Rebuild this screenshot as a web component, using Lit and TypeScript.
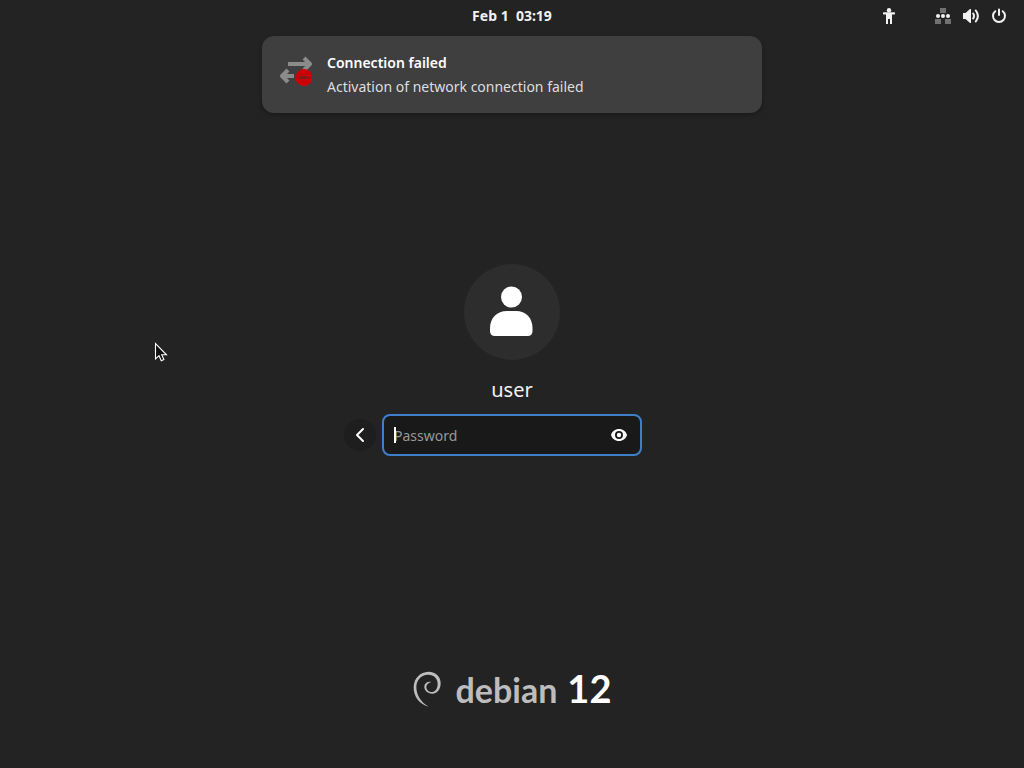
import { LitElement, html, css } from "lit";
import { customElement } from "lit/decorators.js";

@customElement("status-bar")
class StatusBar extends LitElement {
  static styles = css`
    :host {
      display: grid;
      grid-template-columns: 1fr auto 1fr;
      align-items: center;
      height: 32px;
      font-weight: 700;
      color: #f2f2f2;
    }
    time {
      grid-column: 2;
      font-size: 14px;
      line-height: 20px;
      white-space: pre;
    }
    .tray {
      display: flex;
      justify-content: flex-end;
      align-items: center;
      gap: 38px;
      padding-right: 17px;
    }
    .system {
      display: flex;
      gap: 12px;
    }
    button {
      display: block;
      padding: 0;
      border: 0;
      background: none;
      color: inherit;
    }
    svg {
      display: block;
      width: 16px;
      height: 16px;
      fill: currentColor;
    }
  `;
  render() {
    return html`
      <time>Feb 1  03:19</time>
      <div class="tray">
        <button aria-label="Accessibility">
          <svg viewBox="0 0 16 16">
            <circle cx="8" cy="2.2" r="2.2" />
            <path d="M2.6 4.300h10.800q.6 0 .6.7v.8q0 .7-.6.7H11V16H9V11H7v5H5V6.500H2.600q-.6 0-.6-.7V5q0-.7.6-.7z" />
          </svg>
        </button>
        <div class="system">
          <svg viewBox="0 0 16 16" role="img" aria-label="Network">
            <path opacity=".38" d="M5 0h6v5H5zM0 11h6v5H0zM10 11h6v5h-6z" />
            <circle cx="3" cy="8" r="2" />
            <circle cx="8" cy="8" r="2" />
            <circle cx="13" cy="8" r="2" />
          </svg>
          <svg viewBox="0 0 16 16" role="img" aria-label="Volume">
            <path d="M0 5h2.500L7 1h1v14H7l-4.500-4H0z" />
            <path fill="none" stroke="currentColor" stroke-width="2" stroke-linecap="round" d="M10.200 5.500q1.600 2.500 0 5M12.800 2.500q4.200 5.500 0 11" />
          </svg>
          <button aria-label="Power">
            <svg viewBox="0 0 16 16">
              <path fill="none" stroke="currentColor" stroke-width="2" stroke-linecap="round" d="M8 1.500v5.500M4.300 3.200a6 6 0 1 0 7.400 0" />
            </svg>
          </button>
        </div>
      </div>
    `;
  }
}

@customElement("message-banner")
class MessageBanner extends LitElement {
  static styles = css`
    :host {
      display: flex;
      gap: 15px;
      box-sizing: border-box;
      padding: 17px 18px 16px;
      border-radius: 12px;
      background: #3f3f3f;
      box-shadow: 0 2px 5px rgba(0, 0, 0, 0.3);
    }
    svg {
      flex: none;
      width: 32px;
      height: 32px;
      margin-top: 2px;
    }
    .title,
    .body {
      margin: 0;
      font-size: 14px;
      line-height: 20px;
    }
    .title {
      margin-bottom: 4px;
      font-weight: 600;
      color: #fff;
    }
    .body {
      color: #dedede;
    }
  `;
  render() {
    return html`
      <svg viewBox="0 0 32 32" aria-hidden="true">
        <g fill="none" stroke="#8b8b8b" stroke-width="4" stroke-linejoin="round">
          <path d="M8 9H29M24 3l6 6-6 6" />
          <path d="M14 21H3M8 15l-6 6 6 6" />
        </g>
        <circle cx="24" cy="22.500" r="8.500" fill="#cc0008" />
        <path d="M19.500 21h9v3h-9z" fill="#7e1a1c" />
      </svg>
      <div>
        <p class="title">Connection failed</p>
        <p class="body">Activation of network connection failed</p>
      </div>
    `;
  }
}

@customElement("login-prompt")
class LoginPrompt extends LitElement {
  static styles = css`
    :host {
      display: flex;
      flex-direction: column;
      align-items: center;
    }
    .avatar {
      display: block;
      width: 96px;
      height: 96px;
      border-radius: 50%;
      background: #2d2d2d;
    }
    h1 {
      margin: 16px 0 10px;
      font-size: 20px;
      line-height: 28px;
      font-weight: 400;
      color: #f2f2f2;
    }
    form {
      display: grid;
      grid-template-columns: 32px 260px 32px;
      align-items: center;
      gap: 6px;
    }
    button {
      display: grid;
      place-items: center;
      padding: 0;
      border: 0;
      background: none;
      color: #fff;
    }
    .back {
      width: 32px;
      height: 32px;
      border-radius: 50%;
      background: #1e1e1e;
    }
    .field {
      display: flex;
      align-items: center;
      box-sizing: border-box;
      height: 42px;
      padding: 0 13px 0 10px;
      border: 2px solid #3f7fca;
      border-radius: 8px;
      background: #191919;
    }
    .caret {
      width: 2px;
      height: 16px;
      margin-right: -2px;
      background: #fff;
      z-index: 1;
    }
    input {
      flex: 1;
      min-width: 0;
      padding: 2px 0 0;
      border: 0;
      outline: 0;
      background: none;
      color: #fff;
      font: inherit;
      font-size: 14px;
      line-height: 20px;
    }
    input::placeholder {
      color: #989898;
      opacity: 1;
    }
    .icon {
      display: block;
      width: 16px;
      height: 16px;
    }
  `;
  render() {
    return html`
      <svg class="avatar" viewBox="0 0 96 96" fill="#fff" aria-hidden="true">
        <circle cx="47.500" cy="33" r="10.500" />
        <path d="M43 47h9c10 0 16.500 7 16.500 17v3q0 5-5 5H31q-5 0-5-5v-3c0-10 7-17 17-17z" />
      </svg>
      <h1>user</h1>
      <form @submit=${(e: Event) => e.preventDefault()}>
        <button class="back" type="button" aria-label="Back">
          <svg class="icon" viewBox="0 0 16 16" fill="none" stroke="currentColor" stroke-width="2" stroke-linecap="round" stroke-linejoin="round">
            <path d="M11 2 5 8l6 6" />
          </svg>
        </button>
        <div class="field">
          <span class="caret"></span>
          <input type="password" placeholder="Password" aria-label="Password" />
          <button type="button" aria-label="Show password">
            <svg class="icon" viewBox="0 0 16 16">
              <path fill="currentColor" fill-rule="evenodd" d="M8 2c4 0 7 2.500 8 6-1 3.500-4 6-8 6s-7-2.500-8-6c1-3.500 4-6 8-6zM8 4a4 4 0 1 0 0 8 4 4 0 0 0 0-8z" />
              <circle cx="8" cy="8" r="2.200" fill="currentColor" />
            </svg>
          </button>
        </div>
      </form>
    `;
  }
}

@customElement("distro-logo")
class DistroLogo extends LitElement {
  static styles = css`
    :host {
      display: flex;
      align-items: baseline;
      justify-content: center;
      font-family: Lato, "Noto Sans", sans-serif;
      line-height: 48px;
      color: #bdbdbd;
    }
    svg {
      align-self: center;
      width: 28px;
      height: 36px;
      margin-right: 15px;
    }
    .name {
      font-size: 34px;
      font-weight: 700;
    }
    .version {
      margin-left: 10px;
      font-size: 38px;
      font-weight: 700;
      color: #fff;
    }
  `;
  render() {
    return html`
      <svg viewBox="10 12 84 108" fill="currentColor" aria-hidden="true">
        <path d="M57 119C28 111 11 87 12 59C13 33 32 15 56 14C79 14 94 30 93 50C92 68 82 79 68 80C53 80 43 70 44 58C45 48 54 43 65 45C56 48 50 53 50 60C50 69 58 76 68 75C79 73 84 63 84 51C84 34 73 24 56 23C36 22 21 38 20 59C20 83 32 104 57 119Z" />
      </svg>
      <span class="name">debian</span>
      <span class="version">12</span>
    `;
  }
}

@customElement("app-root")
class AppRoot extends LitElement {
  static styles = css`
    :host {
      position: relative;
      display: flex;
      flex-direction: column;
      min-height: 100vh;
      background: #232323;
      font-family: "Noto Sans", sans-serif;
    }
    .banner {
      position: absolute;
      top: 36px;
      left: 50%;
      width: 500px;
      max-width: 100%;
      transform: translateX(-50%);
    }
    main {
      flex: 1;
      display: flex;
      flex-direction: column;
      justify-content: center;
      padding-top: 24px;
    }
    footer {
      padding-bottom: 54px;
    }
    .pointer {
      position: absolute;
      left: 154px;
      top: 342px;
      width: 14px;
      height: 20px;
    }
  `;
  render() {
    return html`
      <status-bar></status-bar>
      <message-banner class="banner" role="alert"></message-banner>
      <main><login-prompt></login-prompt></main>
      <footer><distro-logo></distro-logo></footer>
      <svg class="pointer" viewBox="0 0 14 20" aria-hidden="true">
        <path d="M1.500 1.500v15.500l3.500-3.300 2.300 5 2.600-1.200-2.200-4.700h4.800z" fill="#111" stroke="#fff" stroke-width="1.100" />
      </svg>
    `;
  }
}
